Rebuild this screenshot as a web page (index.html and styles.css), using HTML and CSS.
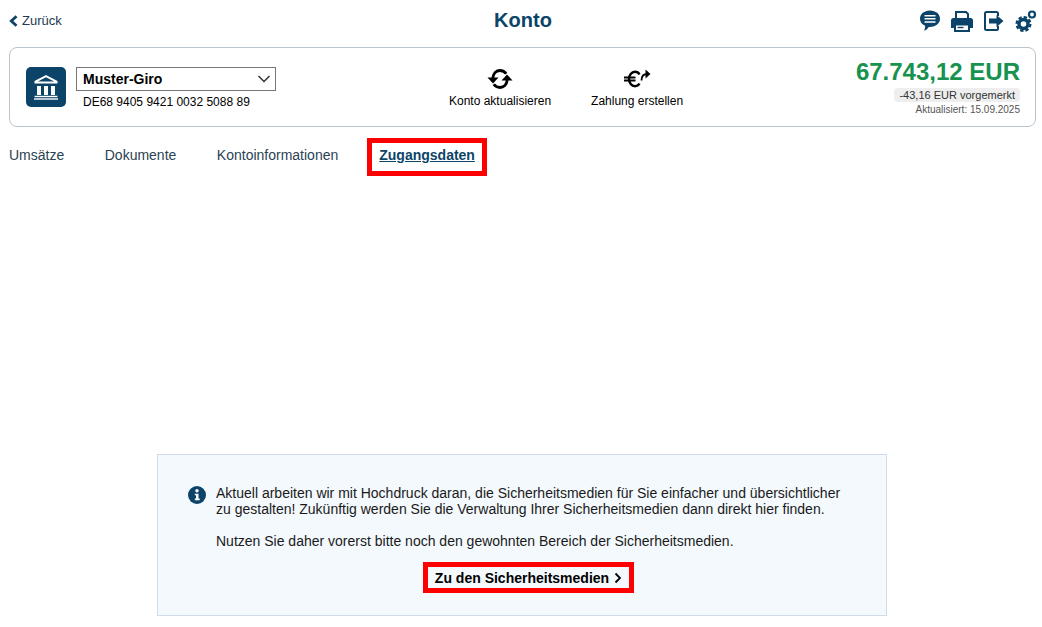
FILE: index.html
```html
<!DOCTYPE html>
<html lang="de">
<head>
<meta charset="utf-8">
<title>Konto</title>
<link rel="stylesheet" href="styles.css">
</head>
<body>
<header class="topbar">
  <a class="back" href="#"><svg class="back-icon" viewBox="0 0 9 12"><path d="M7.500 1.200 2.300 6 7.500 10.800" fill="none" stroke="#0b4468" stroke-width="2.800"/></svg>Zurück</a>
  <h1 class="title">Konto</h1>
  <div class="tools">
    <svg class="tool" viewBox="0 0 22 24"><path d="M11 1.500c5.800 0 10 3.600 10 8.200s-4.200 8.200-10 8.200h-1.300c-1 1.800-2.800 3.400-4.700 3.800.8-1.400 1.200-3 1.100-5C3 15.500 1 12.900 1 9.700 1 5.100 5.200 1.500 11 1.500Z" fill="#0b4468"/><path d="M5.500 6.700h11M5.500 9.800h11M5.500 12.900h11" stroke="#fff" stroke-width="1.500"/></svg>
    <svg class="tool" viewBox="0 0 22 24"><path d="M5 3h10l2 2v5H5Z" fill="none" stroke="#0b4468" stroke-width="2"/><path d="M2.500 9h17A2.500 2.500 0 0 1 22 11.500V19h-3v-4H3v4H0v-7.500A2.500 2.500 0 0 1 2.500 9Z" fill="#0b4468"/><path d="M4 15.500h14V22H4Z" fill="#fff" stroke="#0b4468" stroke-width="2"/><path d="M6.500 18.500h6" stroke="#0b4468" stroke-width="1.400"/></svg>
    <svg class="tool" viewBox="0 0 22 24"><path d="M15 7V4.500A1.500 1.500 0 0 0 13.500 3H3.500A1.500 1.500 0 0 0 2 4.500v15A1.500 1.500 0 0 0 3.500 21h10a1.500 1.500 0 0 0 1.500-1.500V17" fill="none" stroke="#0b4468" stroke-width="2"/><path d="M6 9.500h7.500V6l7 6-7 6v-3.500H6Z" fill="#0b4468"/></svg>
    <svg class="tool" viewBox="0 0 22 24"><circle cx="8.500" cy="15" r="4.500" fill="none" stroke="#0b4468" stroke-width="3.400"/><circle cx="8.500" cy="15" r="6.900" fill="none" stroke="#0b4468" stroke-width="2.200" stroke-dasharray="3.400 2.020"/><circle cx="17" cy="5.500" r="3" fill="none" stroke="#0b4468" stroke-width="2.200"/></svg>
  </div>
</header>

<section class="card">
  <div class="account">
    <div class="bank"><svg viewBox="0 0 40 40"><path d="M20 9.200 30.500 14.500V15.500H9.500V14.500Z" fill="none" stroke="#fff" stroke-width="2"/><path d="M11 19h4v9h-4ZM18 19h4v9h-4ZM25 19h4v9h-4Z" fill="#fff"/><path d="M8.500 29.500h23" stroke="#fff" stroke-width="1.400"/><path d="M8 32h24" stroke="#fff" stroke-width="1.400"/></svg></div>
    <div class="account-text">
      <div class="select">Muster-Giro<svg class="chevron" viewBox="0 0 14 8"><path d="M1.500 1 7 6.500 12.500 1" fill="none" stroke="#333" stroke-width="1.500"/></svg></div>
      <div class="iban">DE68 9405 9421 0032 5088 89</div>
    </div>
  </div>
  <div class="actions">
    <a class="action" href="#">
      <svg class="action-icon" viewBox="0 0 26 22"><path d="M5.800 10C6.300 5.500 9.300 2.500 13 2.500c2.600 0 4.800 1.200 6.200 3.200" fill="none" stroke="#000" stroke-width="2.800"/><path d="M20.200 12C19.700 16.500 16.700 19.500 13 19.500c-2.600 0-4.800-1.200-6.200-3.200" fill="none" stroke="#000" stroke-width="2.800"/><path d="M.5 9.500h11L6 15.500ZM14.500 12.500h11L20 6.500Z" fill="#000"/></svg>
      Konto aktualisieren
    </a>
    <a class="action" href="#">
      <svg class="action-icon euro" viewBox="0 0 28 22"><path d="M16.500 6.500C15.500 4.700 14 3.800 12 3.800 8.500 3.800 6 7 6 11s2.500 7.200 6 7.200c2 0 3.500-.9 4.500-2.700" fill="none" stroke="#000" stroke-width="2.400"/><path d="M1 9.500h11.500M1 12.500h11.500" stroke="#000" stroke-width="1.800"/><path d="M18.500 12.500c0-4.200 2-6.500 6-6.500" fill="none" stroke="#000" stroke-width="1.800"/><path d="M22.500 1.500 27.500 6 22.500 10.500Z" fill="#000"/></svg>
      Zahlung erstellen
    </a>
  </div>
  <div class="balance">
    <div class="amount">67.743,12 EUR</div>
    <div class="pending">-43,16 EUR vorgemerkt</div>
    <div class="updated">Aktualisiert: 15.09.2025</div>
  </div>
</section>

<nav class="tabs">
  <a class="tab" href="#">Umsätze</a>
  <a class="tab" href="#">Dokumente</a>
  <a class="tab" href="#">Kontoinformationen</a>
  <a class="tab tab-active" href="#">Zugangsdaten</a>
</nav>

<section class="notice">
  <svg class="info" viewBox="0 0 18 18"><circle cx="9" cy="9" r="9" fill="#0b4468"/><circle cx="9" cy="4.800" r="1.700" fill="#fff"/><path d="M6.800 7.700H10.500V12.600H11.700V14.200H6.800V12.600H8V9.300H6.800Z" fill="#fff"/></svg>
  <div class="notice-body">
    <p class="notice-text">Aktuell arbeiten wir mit Hochdruck daran, die Sicherheitsmedien für Sie einfacher und übersichtlicher zu gestalten! Zukünftig werden Sie die Verwaltung Ihrer Sicherheitsmedien dann direkt hier finden.</p>
    <p class="notice-text">Nutzen Sie daher vorerst bitte noch den gewohnten Bereich der Sicherheitsmedien.</p>
    <a class="cta" href="#">Zu den Sicherheitsmedien<svg class="cta-icon" viewBox="0 0 8 12"><path d="M1.500 1.500 6 6 1.500 10.500" fill="none" stroke="#000" stroke-width="1.800"/></svg></a>
  </div>
</section>
</body>
</html>
```
FILE: styles.css
```css
* { box-sizing: border-box; }
html, body { margin: 0; padding: 0; }
body {
  font-family: "Liberation Sans", Arial, sans-serif;
  font-size: 14px;
  color: #000;
  background: #fff;
  height: 627px;
  overflow: hidden;
}
a { color: inherit; text-decoration: none; }

.topbar {
  display: grid;
  grid-template-columns: 1fr auto 1fr;
  align-items: center;
  height: 41px;
  padding: 0 5px 0 9px;
}
.back { display: flex; align-items: center; gap: 4px; font-size: 13px; color: #1d3a50; }
.back-icon { width: 9px; height: 12px; }
.title { margin: 0; font-size: 20px; font-weight: 700; color: #0b4468; }
.tools { display: flex; justify-content: flex-end; gap: 10px; }
.tool { width: 22px; height: 24px; }

.card {
  display: flex;
  align-items: center;
  height: 80px;
  margin: 6px 6px 0 9px;
  padding: 0 15px 0 16px;
  border: 1px solid #b9c6cf;
  border-radius: 8px;
}
.account { display: flex; align-items: center; gap: 10px; width: 423px; }
.bank {
  width: 40px; height: 40px;
  background: #0b4468;
  border-radius: 5px;
}
.bank svg { display: block; width: 40px; height: 40px; }
.account-text { padding-top: 1px; }
.select {
  display: flex;
  align-items: center;
  justify-content: space-between;
  width: 200px;
  height: 24px;
  padding: 0 4px 0 6px;
  border: 1px solid #777;
  font-weight: 700;
}
.chevron { width: 14px; height: 8px; }
.iban { margin: 4px 0 0 7px; font-size: 12px; line-height: 14px; }
.actions { display: flex; gap: 40px; padding-top: 2px; }
.action {
  display: flex;
  flex-direction: column;
  align-items: center;
  gap: 4px;
  font-size: 12px;
  line-height: 14px;
}
.action-icon { width: 26px; height: 22px; }
.euro { width: 28px; }
.balance { margin-left: auto; display: flex; flex-direction: column; align-items: flex-end; }
.amount { font-size: 24px; font-weight: 700; line-height: 28px; color: #17924f; }
.pending {
  margin-top: 2px;
  padding: 0 5px;
  background: #eee;
  border-radius: 4px;
  font-size: 11px;
  line-height: 14px;
  color: #333;
}
.updated { margin-top: 2px; font-size: 10px; line-height: 12px; color: #555; }

.tabs {
  display: flex;
  align-items: center;
  gap: 40.500px;
  height: 38px;
  margin-top: 11px;
  padding-left: 9px;
  color: #2b4254;
}
.tab { padding-bottom: 5px; }
.tab-active {
  margin-left: -11.500px;
  padding: 0 7px 5px;
  height: 38px;
  display: flex;
  align-items: center;
  border: 5px solid #f00;
  font-weight: 700;
  color: #0b4468;
  text-decoration: underline;
}

.notice {
  display: flex;
  gap: 10px;
  width: 730px;
  height: 162px;
  margin: 278px 0 0 157px;
  padding: 30px 30px 0 30px;
  background: #f4f9fd;
  border: 1px solid #cfdbe6;
}
.info { flex: none; width: 18px; height: 18px; margin-top: 1px; }
.notice-body { flex: 1; display: flex; flex-direction: column; }
.notice-text { margin: 0 0 16px; line-height: 16px; color: #1a1a1a; }
.cta {
  align-self: center;
  display: flex;
  align-items: center;
  gap: 5px;
  height: 31px;
  margin: -3px 15px 0 0;
  padding: 0 7px;
  border: 5px solid #f00;
  font-size: 14px;
  font-weight: 700;
}
.cta-icon { width: 8px; height: 12px; }
```
